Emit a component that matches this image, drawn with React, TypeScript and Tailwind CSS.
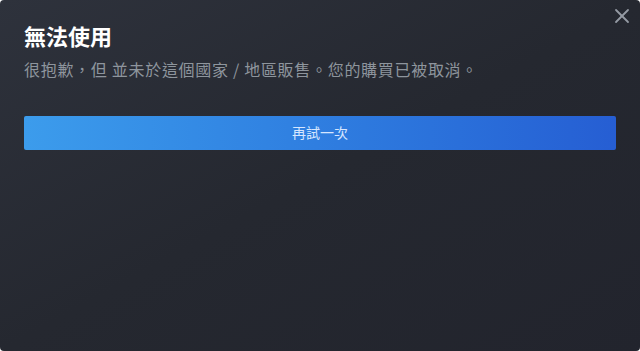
import { X } from "lucide-react";

export default function App() {
  return (
    <div
      lang="zh-Hant-TW"
      className="relative h-[351px] w-[640px] overflow-hidden rounded-[4px] bg-gradient-to-br from-[#2e323c] via-[#252830] to-[#22242d] text-white"
      style={{ fontFamily: '"Liberation Sans", "Noto Sans CJK TC", sans-serif' }}
    >
      <button className="absolute right-[6px] top-[4px] text-[#949aa3]">
        <X size={24} strokeWidth={1.8} />
      </button>

      <div className="px-6 pt-[24px]">
        <h1 className="text-[22px] font-bold leading-[28px] text-white">無法使用</h1>
        <p
          className="mt-[6px] text-[16px] leading-[22px] tracking-[0.7px] text-[#8e959d]"
          style={{ fontFamily: '"Noto Sans CJK TC", "Noto Sans TC", "Liberation Sans", sans-serif' }}
        >
          很抱歉，但 並未於這個國家 / 地區販售。您的購買已被取消。
        </p>

        <button className="mt-[36px] flex h-[34px] w-full items-center justify-center rounded-[2px] bg-gradient-to-r from-[#3c9cec] to-[#265ed3] text-[14px] text-[#d6e6ff]">
          再試一次
        </button>
      </div>
    </div>
  );
}
